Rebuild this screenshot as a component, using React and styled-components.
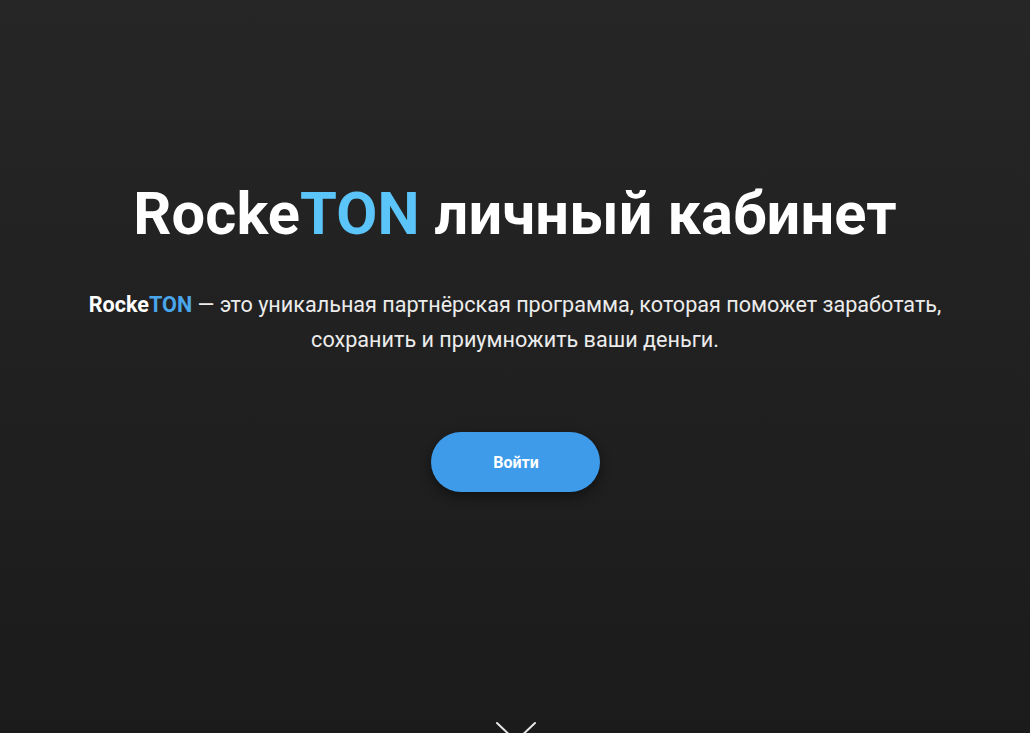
import React from "react";
import styled, { createGlobalStyle } from "styled-components";

const GlobalStyle = createGlobalStyle`
  html, body {
    margin: 0;
    padding: 0;
  }
  body {
    font-family: Roboto, "Liberation Sans", sans-serif;
    background: #1b1b1b;
  }
`;

const App = () => {
  return (
    <>
      <GlobalStyle />
      <Container>
        <Content>
          <Header>
            Rocke<Accent>TON</Accent> личный кабинет
          </Header>
          <Description>
            <Brand>
              Rocke<BrandAccent>TON</BrandAccent>
            </Brand>{" "}
            — это уникальная партнёрская программа, которая поможет заработать,
            <br />
            сохранить и приумножить ваши деньги.
          </Description>
          <LoginButton>Войти</LoginButton>
        </Content>
        <ScrollHint>
          <svg width="44" height="24" viewBox="0 0 44 24">
            <path
              d="M3 2 L22 20 L41 2"
              fill="none"
              stroke="#e6e6e6"
              strokeWidth="2"
              strokeLinecap="round"
            />
          </svg>
        </ScrollHint>
      </Container>
    </>
  );
};

const Container = styled.div`
  height: 733px;
  width: 100%;
  background: linear-gradient(180deg, #262626 0%, #1b1b1b 100%);
  display: flex;
  flex-direction: column;
  align-items: center;
  overflow: hidden;
`;

const Content = styled.div`
  display: flex;
  flex-direction: column;
  align-items: center;
  padding-top: 178px;
`;

const Header = styled.h1`
  margin: 0;
  font-size: 59.6px;
  font-weight: 700;
  color: #ffffff;
  line-height: 72px;
  letter-spacing: 0.1px;
`;

const Accent = styled.span`
  color: #5bc4f8;
`;

const Description = styled.p`
  margin: 37px 0 0;
  font-size: 21.6px;
  font-weight: 400;
  line-height: 35px;
  color: #ececec;
  text-align: center;
`;

const Brand = styled.span`
  font-weight: 700;
  color: #ffffff;
`;

const BrandAccent = styled.span`
  color: #4aa6ea;
`;

const LoginButton = styled.button`
  margin-top: 75px;
  margin-left: 2px;
  width: 169px;
  height: 60px;
  border: none;
  border-radius: 30px;
  background: #3d9be9;
  color: #ffffff;
  font-family: Roboto, "Liberation Sans", sans-serif;
  font-size: 16px;
  font-weight: 700;
  box-shadow: 0 4px 12px rgba(0, 0, 0, 0.45);
  cursor: pointer;
`;

const ScrollHint = styled.div`
  margin-top: auto;
  height: 12px;
  display: flex;
  align-items: flex-start;
  padding-left: 2px;
`;

export default App;
